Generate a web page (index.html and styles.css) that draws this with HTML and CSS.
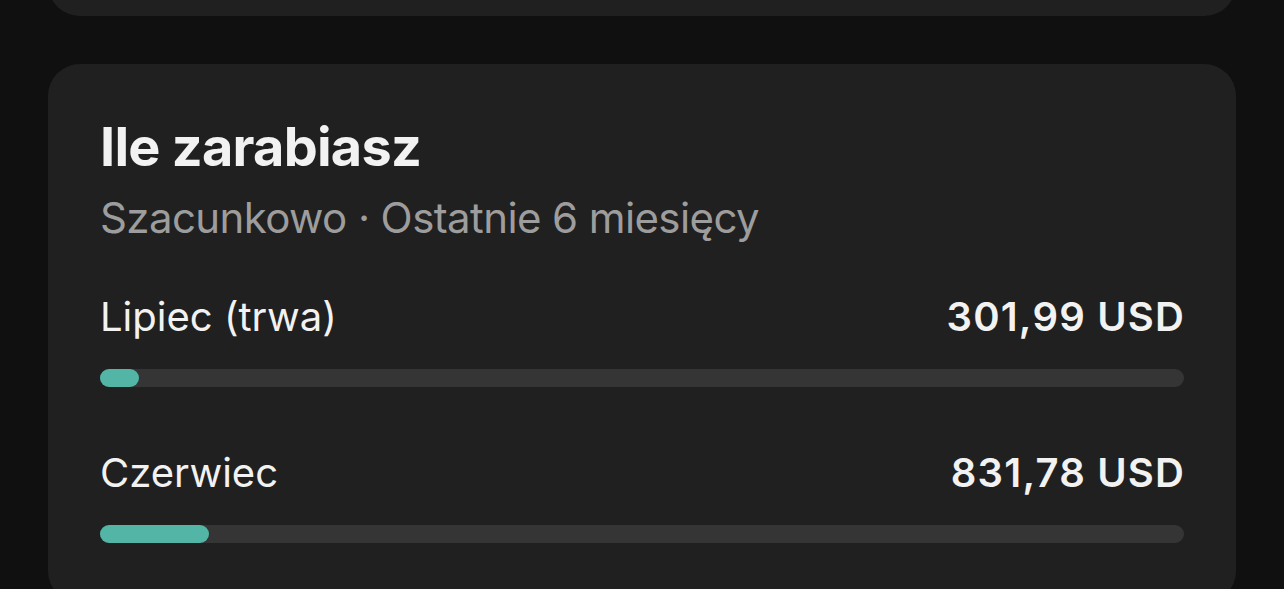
FILE: index.html
```html
<!DOCTYPE html>
<html>
<head>
    <meta charset="utf-8" />
    <title>Ile zarabiasz</title>
    <link rel="stylesheet" href="styles.css">
</head>
<body>
    <div class="page">
        <div class="card card_prev"></div>

        <div class="card earnings">
            <h1>Ile zarabiasz</h1>
            <div class="subtitle">Szacunkowo · Ostatnie 6 miesięcy</div>

            <div class="months">
                <div class="month">
                    <div class="month_head">
                        <span class="month_name">Lipiec (trwa)</span>
                        <span class="month_amount">301,99 USD</span>
                    </div>
                    <div class="bar"><div class="bar_fill" style="width: 3.6%"></div></div>
                </div>

                <div class="month">
                    <div class="month_head">
                        <span class="month_name">Czerwiec</span>
                        <span class="month_amount">831,78 USD</span>
                    </div>
                    <div class="bar"><div class="bar_fill" style="width: 10.1%"></div></div>
                </div>
            </div>
        </div>
    </div>
</body>
</html>
```

FILE: styles.css
```css
body {
    margin: 0;
    background-color: #101010;
    color: #f2f2f2;
    font-family: "Inter", "Noto Sans", sans-serif;
    overflow: hidden;
}

.page {
    display: flex;
    flex-direction: column;
    gap: 48px;
    padding: 0 48px;
}

.card {
    background-color: #202020;
    border-radius: 32px;
}

.card_prev {
    height: 120px;
    margin-top: -104px;
}

.earnings {
    padding: 51px 52px 60px;
}

.earnings h1 {
    margin: 0;
    font-size: 54px;
    font-weight: 700;
    line-height: 1.2;
    letter-spacing: -0.75px;
}

.subtitle {
    margin-top: 13px;
    font-size: 42px;
    line-height: 1.2;
    letter-spacing: -0.6px;
    color: #9d9d9d;
}

.months {
    display: flex;
    flex-direction: column;
    gap: 62px;
    margin-top: 50px;
}

.month {
    display: flex;
    flex-direction: column;
    gap: 28px;
}

.month_head {
    display: flex;
    justify-content: space-between;
    font-size: 40px;
    line-height: 1.2;
}

.month_amount {
    font-weight: 600;
    letter-spacing: 1.2px;
    margin-right: -1.2px;
}

.bar {
    height: 18px;
    border-radius: 9px;
    background-color: #353535;
}

.bar_fill {
    height: 100%;
    border-radius: 9px;
    background-color: #52b5a6;
}
```
